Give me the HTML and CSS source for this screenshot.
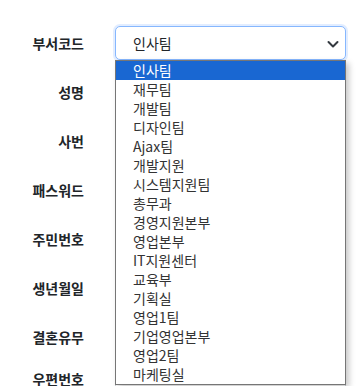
FILE: index.html
```html
<!DOCTYPE html>
<html lang="ko">
<head>
<meta charset="utf-8">
<link rel="stylesheet" href="styles.css">
</head>
<body>
<form class="form">
  <div class="row">
    <label class="label">부서코드</label>
    <div class="field">
      <div class="select">
        <span class="select-text">인사팀</span>
        <svg class="chev" width="12" height="8" viewBox="0 0 12 8"><path d="M1.5 2l4.5 4.5 4.5-4.5" fill="none" stroke="#343a40" stroke-width="2" stroke-linecap="round" stroke-linejoin="round"/></svg>
      </div>
      <ul class="listbox">
        <li class="opt selected">인사팀</li>
        <li class="opt">재무팀</li>
        <li class="opt">개발팀</li>
        <li class="opt">디자인팀</li>
        <li class="opt">Ajax팀</li>
        <li class="opt">개발지원</li>
        <li class="opt">시스템지원팀</li>
        <li class="opt">총무과</li>
        <li class="opt">경영지원본부</li>
        <li class="opt">영업본부</li>
        <li class="opt">IT지원센터</li>
        <li class="opt">교육부</li>
        <li class="opt">기획실</li>
        <li class="opt">영업1팀</li>
        <li class="opt">기업영업본부</li>
        <li class="opt">영업2팀</li>
        <li class="opt">마케팅실</li>
      </ul>
    </div>
  </div>
  <div class="row"><label class="label">성명</label><div class="field"><div class="input"></div></div></div>
  <div class="row"><label class="label">사번</label><div class="field"><div class="input"></div></div></div>
  <div class="row"><label class="label">패스워드</label><div class="field"><div class="input"></div></div></div>
  <div class="row"><label class="label">주민번호</label><div class="field"><div class="input"></div></div></div>
  <div class="row"><label class="label">생년월일</label><div class="field"><div class="input"></div></div></div>
  <div class="row"><label class="label">결혼유무</label><div class="field"><div class="input"></div></div></div>
  <div class="row row-top"><label class="label">우편번호</label><div class="field"><div class="input"></div></div></div>
</form>
</body>
</html>
```

FILE: styles.css
```css
html, body {
  margin: 0;
  padding: 0;
  background: #fff;
  overflow: hidden;
}
body {
  font-family: "Noto Sans CJK KR", "Noto Sans", sans-serif;
  font-size: 14px;
  color: #212529;
}
.form {
  display: flex;
  flex-direction: column;
  gap: 15px;
  padding-top: 26px;
}
.row {
  display: flex;
  align-items: center;
  height: 34px;
}
.row-top {
  align-items: flex-start;
  height: 17px;
}
.label {
  width: 84px;
  margin-right: 31px;
  text-align: right;
  font-weight: bold;
  line-height: 20px;
  color: #212529;
}
.field {
  position: relative;
  width: 231px;
  height: 34px;
}
.select, .input {
  box-sizing: border-box;
  width: 231px;
  height: 34px;
  border: 1px solid #ced4da;
  border-radius: 5px;
  background: #fff;
}
.select {
  display: flex;
  align-items: center;
  justify-content: space-between;
  padding: 0 6px 0 17px;
  border-color: #86b7fe;
  box-shadow: 0 0 0 2px rgba(13, 110, 253, 0.12);
}
.select-text {
  line-height: 20px;
  color: #212529;
}
.chev {
  display: block;
  margin-top: 1px;
}
.listbox {
  position: absolute;
  top: 34px;
  left: 0;
  z-index: 10;
  box-sizing: border-box;
  width: 231px;
  margin: 0;
  padding: 0;
  list-style: none;
  background: #fff;
  border: 1px solid #767676;
  box-shadow: 3px 3px 6px rgba(0, 0, 0, 0.22);
}
.opt {
  height: 19px;
  line-height: 19px;
  padding-left: 17px;
  color: #333;
  white-space: nowrap;
}
.opt.selected {
  background: #1967d2;
  color: #fff;
}
```
